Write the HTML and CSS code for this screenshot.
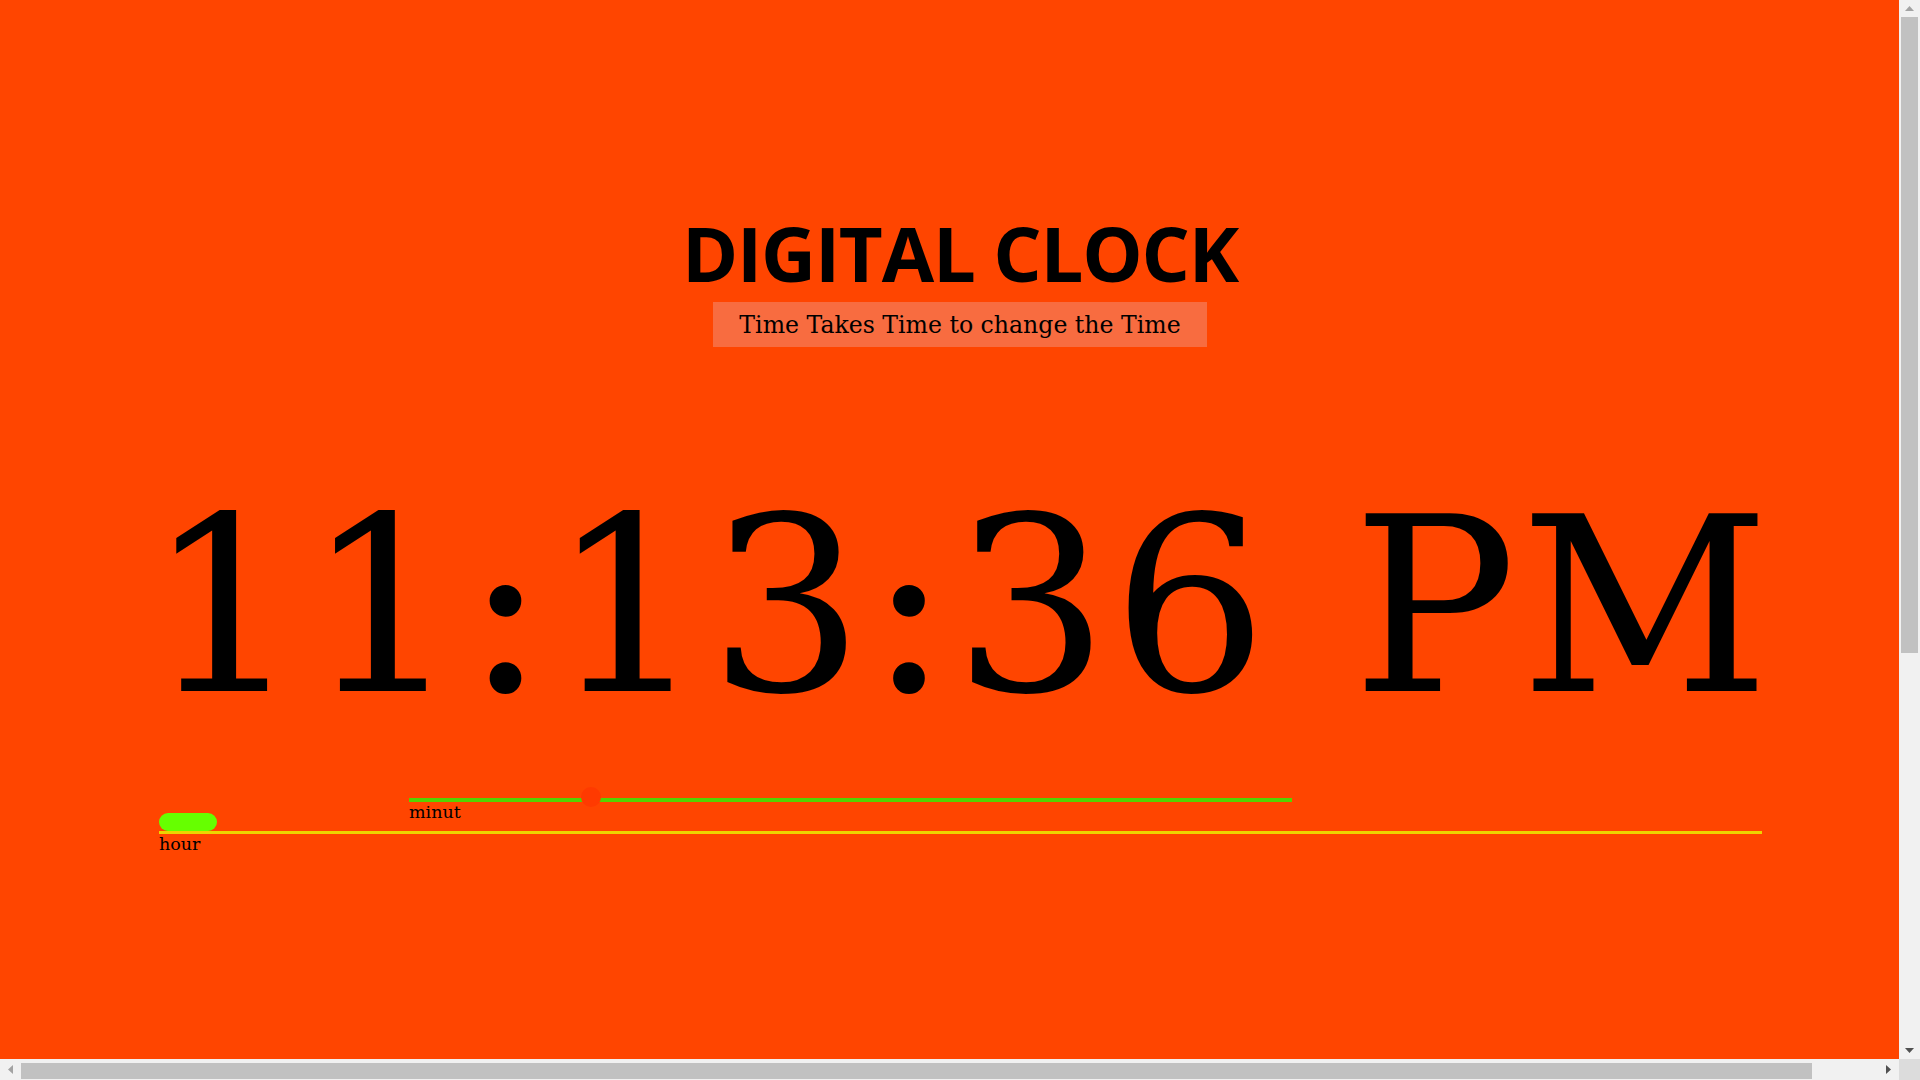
FILE: index.html
```html
<!DOCTYPE html>
<html lang="en">
<head>
<meta charset="utf-8">
<title>Digital Clock</title>
<link rel="stylesheet" href="styles.css">
</head>
<body>
<div class="window">
  <div class="viewport">
    <main class="page">
      <header class="head">
        <h1 class="title">DIGITAL CLOCK</h1>
        <p class="tagline">Time Takes Time to change the Time</p>
      </header>
      <div class="clock">11:13:36 PM</div>
      <div class="sliders">
        <div class="slider slider-minute">
          <div class="track track-minute" role="slider" aria-valuemin="0" aria-valuemax="60" aria-valuenow="12">
            <span class="thumb thumb-minute" style="margin-left:172px"></span>
          </div>
          <label class="slider-label">minut</label>
        </div>
        <div class="slider slider-hour">
          <div class="track track-hour" role="slider" aria-valuemin="0" aria-valuemax="24" aria-valuenow="0">
            <span class="thumb thumb-hour" style="margin-left:0px"></span>
          </div>
          <label class="slider-label">hour</label>
        </div>
      </div>
    </main>
  </div>
  <div class="vbar">
    <div class="sb-btn sb-btn-v">
      <svg width="9" height="5" viewBox="0 0 9 5"><path d="M0 5 L4.5 0 L9 5 Z" fill="#a3a3a3"/></svg>
    </div>
    <div class="vthumb"></div>
    <div class="sb-fill"></div>
    <div class="sb-btn sb-btn-v">
      <svg width="9" height="5" viewBox="0 0 9 5"><path d="M0 0 L9 0 L4.5 5 Z" fill="#505050"/></svg>
    </div>
  </div>
  <div class="hbar">
    <div class="sb-btn sb-btn-h">
      <svg width="5" height="9" viewBox="0 0 5 9"><path d="M5 0 L5 9 L0 4.5 Z" fill="#a3a3a3"/></svg>
    </div>
    <div class="hthumb"></div>
    <div class="sb-fill"></div>
    <div class="sb-btn sb-btn-h">
      <svg width="5" height="9" viewBox="0 0 5 9"><path d="M0 0 L5 4.5 L0 9 Z" fill="#505050"/></svg>
    </div>
  </div>
  <div class="corner"></div>
</div>
</body>
</html>
```

FILE: styles.css
```css
html, body {
  margin: 0;
  padding: 0;
  overflow: hidden;
}

body {
  font-family: "DejaVu Serif", "Liberation Serif", serif;
  color: #000;
}

.window {
  display: grid;
  grid-template-columns: minmax(0, 1fr) 21px;
  grid-template-rows: minmax(0, 1fr) 21px;
  width: 100vw;
  height: 100vh;
}

.viewport {
  overflow: hidden;
  background: #ff4500;
}

.page {
  width: 1920px;
  padding-top: 215px;
}

.head {
  display: flex;
  flex-direction: column;
  align-items: center;
}

.title {
  margin: 0;
  font-family: "Open Sans", "Noto Sans", sans-serif;
  font-weight: 700;
  font-size: 76px;
  line-height: 76px;
  letter-spacing: -1.2px;
}

.tagline {
  margin: 11px 0 0;
  padding: 9px 26px 8px;
  background: #f86c40;
  font-family: "DejaVu Serif", "Liberation Serif", serif;
  font-size: 23.6px;
  line-height: 28px;
}

.clock {
  margin-top: 138px;
  text-align: center;
  font-family: "DejaVu Serif", "Liberation Serif", serif;
  font-size: 244px;
  line-height: 244px;
  letter-spacing: 3.6px;
  white-space: nowrap;
}

.sliders {
  display: flex;
  flex-direction: column;
  align-items: flex-start;
  gap: 9px;
  margin-top: 69px;
  padding-left: 159px;
}

.slider {
  display: flex;
  flex-direction: column;
  align-items: flex-start;
}

.slider-minute {
  margin-left: 250px;
}

.track {
  display: flex;
}

.track-minute {
  width: 883px;
  height: 4px;
  background: #55d400;
  align-items: center;
}

.track-hour {
  width: 1603px;
  height: 3px;
  background: #eed400;
  align-items: flex-end;
}

.thumb {
  flex: none;
  display: block;
}

.thumb-minute {
  width: 20px;
  height: 20px;
  border-radius: 50%;
  background: #ff3a00;
  margin-bottom: 6px;
}

.thumb-hour {
  width: 58px;
  height: 18px;
  border-radius: 10px;
  background: #66ff00;
  margin-bottom: 3px;
}

.slider-label {
  font-family: "DejaVu Serif", "Liberation Serif", serif;
  font-size: 17.5px;
  line-height: 20px;
}

/* scrollbars */
.vbar {
  display: flex;
  flex-direction: column;
  background: #f1f1f1;
}

.hbar {
  display: flex;
  flex-direction: row;
  align-items: center;
  background: #f1f1f1;
}

.sb-btn {
  flex: none;
  display: flex;
  align-items: center;
  justify-content: center;
}

.sb-btn-v {
  height: 17px;
}

.sb-btn-h {
  width: 21px;
  height: 21px;
}

.sb-fill {
  flex: 1;
}

.vthumb {
  flex: none;
  height: 636px;
  margin: 0 2px 0 2px;
  background: #c1c1c1;
}

.hthumb {
  flex: none;
  width: 1791px;
  height: 16px;
  margin-top: 2px;
  background: #c1c1c1;
}

.corner {
  background: #dcdcdc;
}
```
